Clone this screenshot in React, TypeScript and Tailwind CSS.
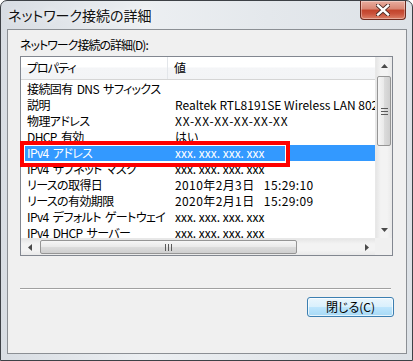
import React from "react";

const rows: [string, string, string][] = [
  ["接続固有 DNS サフィックス", "", ""],
  ["説明", "Realtek RTL8191SE Wireless LAN 802.11n PCI-E NIC", ""],
  ["物理アドレス", "XX-XX-XX-XX-XX-XX", "tracking-[0.8px]"],
  ["DHCP 有効", "はい", ""],
  ["IPv4 アドレス", "xxx. xxx. xxx. xxx", ""],
  ["IPv4 サブネット マスク", "xxx. xxx. xxx. xxx", ""],
  ["リースの取得日", "2010年2月3日   15:29:10", "tracking-[0.4px]"],
  ["リースの有効期限", "2020年2月1日   15:29:09", "tracking-[0.4px]"],
  ["IPv4 デフォルト ゲートウェイ", "xxx. xxx. xxx. xxx", ""],
  ["IPv4 DHCP サーバー", "xxx. xxx. xxx. xxx", ""],
];

function Arrow({ dir }: { dir: "up" | "down" | "left" | "right" }) {
  const pts =
    dir === "up"
      ? "0,4 7,4 3.5,0"
      : dir === "down"
      ? "0,0 7,0 3.5,4"
      : dir === "left"
      ? "4,0 4,7 0,3.5"
      : "0,0 0,7 4,3.5";
  const w = dir === "up" || dir === "down" ? 7 : 4;
  const h = dir === "up" || dir === "down" ? 4 : 7;
  return (
    <svg width={w} height={h} viewBox={`0 0 ${w} ${h}`}>
      <polygon points={pts} fill="#4a4a4a" />
    </svg>
  );
}

export default function App() {
  return (
    <div
      className="w-[413px] h-[361px] flex flex-col rounded-t-[7px] border border-[#3d4146] bg-[linear-gradient(90deg,#d8dde3,#eceff2_35%,#e4e8ec_65%,#dde2e7)] overflow-hidden text-black font-['Noto_Sans_CJK_JP',sans-serif] [font-feature-settings:'palt']"
    >
      {/* Title bar */}
      <div className="h-[28px] flex items-start justify-between shrink-0">
        <div className="pl-[7px] pt-[5px] text-[14px] leading-[18px] text-[#111] [text-shadow:0_0_6px_#ffffff]">
          ネットワーク接続の詳細
        </div>
        <div className="mr-[6px] w-[46px] h-[19px] rounded-b-[4px] border border-t-0 border-[#6d2a1e] bg-[linear-gradient(#e9ad9f,#d98572_45%,#c2432b_50%,#c9513a_70%,#dc8068)] flex items-center justify-center shadow-[inset_0_0_0_1px_rgba(255,255,255,0.35)]">
          <svg width="14" height="12" viewBox="0 0 14 12">
            <path d="M2 1.5 L12 10.5 M12 1.5 L2 10.5" stroke="#4a2a24" strokeWidth="4.2" strokeLinecap="square" />
            <path d="M2 1.5 L12 10.5 M12 1.5 L2 10.5" stroke="#ffffff" strokeWidth="2.4" strokeLinecap="square" />
          </svg>
        </div>
      </div>

      {/* Client area */}
      <div className="ml-[6px] mr-[5px] h-[325px] shrink-0 border border-[#8b8f94] bg-[#f0f0f0] flex flex-col">
        <div className="ml-[12px] mt-[8px] text-[12px] leading-[14px] tracking-[-1px]">ネットワーク接続の詳細(D):</div>

        {/* List view */}
        <div className="relative ml-[12px] mt-[4px] w-[373px] h-[200px] border border-[#828790] bg-white">
          <div className="w-full h-full grid grid-cols-[1fr_17px] grid-rows-[1fr_17px]">
            {/* content */}
            <div className="overflow-hidden text-[12px]">
              <div className="h-[23px] flex border-b border-[#d5d5d5] bg-[linear-gradient(#ffffff,#ffffff_45%,#f4f5f7_50%,#f3f4f6)]">
                <div className="w-[147px] pl-[6px] leading-[22px] border-r border-[#e3e6ea] tracking-[-1px]">プロパティ</div>
                <div className="pl-[6px] leading-[22px]">値</div>
              </div>
              <div className="pt-[1px]">
                {rows.map(([k, v, extra], i) => {
                  const sel = i === 4;
                  return (
                    <div
                      key={i}
                      className={
                        sel
                          ? "h-[16px] flex leading-[16px] bg-[#3399ff] text-white"
                          : "h-[16px] flex leading-[16px]"
                      }
                    >
                      <div className="w-[148px] shrink-0 pl-[6px] whitespace-nowrap overflow-hidden tracking-[-0.6px] [word-spacing:2px]">{k}</div>
                      <div className={`pl-[6px] whitespace-pre overflow-hidden ${extra}`}>{v}</div>
                    </div>
                  );
                })}
              </div>
            </div>

            {/* vertical scrollbar */}
            <div className="flex flex-col bg-[linear-gradient(90deg,#e6e6e6,#f3f3f3_30%,#f3f3f3_70%,#e9e9e9)] border-l border-[#e8e8e8]">
              <div className="h-[17px] flex items-center justify-center">
                <Arrow dir="up" />
              </div>
              <div className="mx-[1px] mt-[2px] h-[70px] rounded-[2px] border border-[#959595] bg-[linear-gradient(90deg,#f6f6f6,#e9e9e9_50%,#dcdcdc_50%,#cfcfcf)] flex flex-col items-center justify-center gap-[2px]">
                <div className="w-[7px] h-[1px] bg-[#5a5a5a]" />
                <div className="w-[7px] h-[1px] bg-[#5a5a5a]" />
                <div className="w-[7px] h-[1px] bg-[#5a5a5a]" />
              </div>
              <div className="flex-1" />
              <div className="h-[17px] flex items-center justify-center">
                <Arrow dir="down" />
              </div>
            </div>

            {/* horizontal scrollbar */}
            <div className="flex bg-[linear-gradient(#e6e6e6,#f3f3f3_30%,#f3f3f3_70%,#e9e9e9)] border-t border-[#e8e8e8]">
              <div className="w-[17px] flex items-center justify-center">
                <Arrow dir="left" />
              </div>
              <div className="ml-[2px] my-[1px] w-[257px] rounded-[2px] border border-[#959595] bg-[linear-gradient(#f6f6f6,#e9e9e9_50%,#dcdcdc_50%,#cfcfcf)] flex items-center justify-center gap-[2px]">
                <div className="w-[1px] h-[7px] bg-[#5a5a5a]" />
                <div className="w-[1px] h-[7px] bg-[#5a5a5a]" />
                <div className="w-[1px] h-[7px] bg-[#5a5a5a]" />
              </div>
              <div className="flex-1" />
              <div className="w-[17px] flex items-center justify-center">
                <Arrow dir="right" />
              </div>
            </div>
            <div className="bg-[#f0f0f0]" />
          </div>

          {/* annotation box */}
          <div className="absolute left-[-1px] top-[84px] w-[270px] h-[26px] border-[4px] border-[#ff0000] shadow-[inset_0_0_0_1px_#ffffff]" />
        </div>

        {/* separator */}
        <div className="ml-[12px] mt-[32px] w-[371px] border-t border-b border-t-[#a0a0a0] border-b-white" />

        {/* button */}
        <div className="flex justify-end pr-[12px] mt-[7px]">
          <div className="w-[87px] h-[20px] rounded-[3px] border border-[#3c7fb1] bg-[linear-gradient(#eaf6fd,#d9f0fc_50%,#bee6fd_50%,#a7d9f5)] shadow-[inset_0_0_0_1px_rgba(255,255,255,0.7)] flex items-center justify-center text-[12px] leading-[14px]">
            閉じる(C)
          </div>
        </div>
      </div>
    </div>
  );
}
